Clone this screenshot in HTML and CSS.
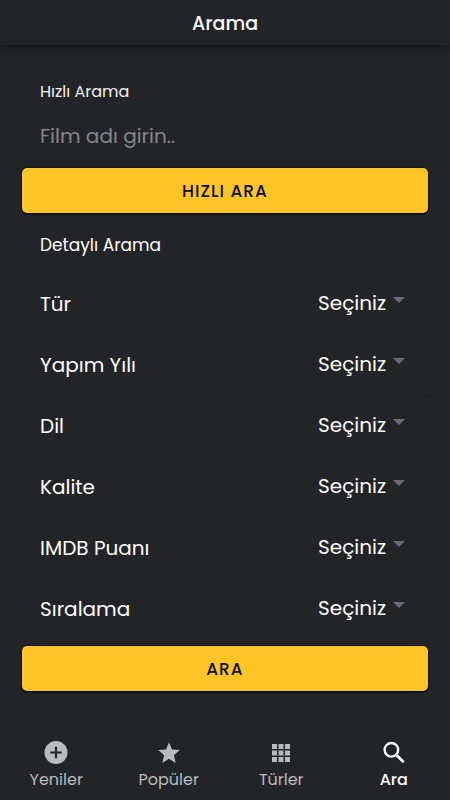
FILE: index.html
```html
<!DOCTYPE html>
<html lang="tr">
<head>
<meta charset="utf-8">
<meta name="viewport" content="width=device-width, initial-scale=1">
<title>Arama</title>
<link rel="stylesheet" href="styles.css">
</head>
<body>
<header class="toolbar"><h1 class="title">Arama</h1></header>
<main class="content">
  <form class="quick">
    <label class="quick-label" for="film">Hızlı Arama</label>
    <input class="quick-input" id="film" type="text" placeholder="Film adı girin..">
    <button class="submit" type="button">HIZLI ARA</button>
  </form>
  <form class="detail">
    <h2 class="heading">Detaylı Arama</h2>
    <div class="row">
      <label for="tur">Tür</label>
      <select id="tur"><option>Seçiniz</option></select>
      <span class="caret"></span>
    </div>
    <div class="row">
      <label for="yil">Yapım Yılı</label>
      <select id="yil"><option>Seçiniz</option></select>
      <span class="caret"></span>
    </div>
    <div class="row">
      <label for="dil">Dil</label>
      <select id="dil"><option>Seçiniz</option></select>
      <span class="caret"></span>
    </div>
    <div class="row">
      <label for="kalite">Kalite</label>
      <select id="kalite"><option>Seçiniz</option></select>
      <span class="caret"></span>
    </div>
    <div class="row">
      <label for="imdb">IMDB Puanı</label>
      <select id="imdb"><option>Seçiniz</option></select>
      <span class="caret"></span>
    </div>
    <div class="row">
      <label for="sira">Sıralama</label>
      <select id="sira"><option>Seçiniz</option></select>
      <span class="caret"></span>
    </div>
    <button class="submit" type="button">ARA</button>
  </form>
</main>
<nav class="tabs">
  <a class="tab" href="#yeniler">
    <svg class="icon" viewBox="0 0 28 28" aria-hidden="true"><path fill="currentColor" fill-rule="evenodd" d="M14 3a11.500 11.500 0 1 0 0 23 11.500 11.500 0 0 0 0-23zM12.900 8.800h2.200v4.600h4.600v2.200h-4.600v4.600h-2.200v-4.600H8.300v-2.200h4.600z"/></svg>
    <span>Yeniler</span>
  </a>
  <a class="tab" href="#populer">
    <svg class="icon" viewBox="0 0 28 28" aria-hidden="true"><path fill="currentColor" d="M14 20.800l6.700 4.100-1.800-7.700 5.900-5.100-7.800-.7L14 4.200l-3 7.200-7.800.7 5.900 5.100-1.800 7.700z"/></svg>
    <span>Popüler</span>
  </a>
  <a class="tab" href="#turler">
    <svg class="icon" viewBox="0 0 28 28" aria-hidden="true"><path fill="currentColor" d="M5 6h5v5H5zM11.500 6h5v5h-5zM18 6h5v5h-5zM5 12.500h5v5H5zM11.500 12.500h5v5h-5zM18 12.500h5v5h-5zM5 19h5v5H5zM11.500 19h5v5h-5zM18 19h5v5h-5z"/></svg>
    <span>Türler</span>
  </a>
  <a class="tab active" href="#ara" aria-current="page">
    <svg class="icon" viewBox="0 0 28 28" aria-hidden="true"><circle cx="11.400" cy="11.800" r="6.800" fill="none" stroke="currentColor" stroke-width="2.400"/><path fill="currentColor" d="M16 18.400v-1l.9-.9h1l6.800 6.800-1.900 1.900-6.800-6.800z"/></svg>
    <span>Ara</span>
  </a>
</nav>
</body>
</html>
```
FILE: styles.css
```css
* {
  box-sizing: border-box;
}

body {
  margin: 0;
  min-height: 100vh;
  display: flex;
  flex-direction: column;
  background: #232428;
  color: #fff;
  font-family: Poppins, Inter, sans-serif;
}

.toolbar {
  height: 45px;
  display: flex;
  align-items: center;
  justify-content: center;
  padding-top: 2px;
  box-shadow: 0 2px 7px rgba(0, 0, 0, 0.4);
}

.title {
  margin: 0;
  font-size: 19px;
  font-weight: 500;
  line-height: 28px;
}

.content {
  flex: 1;
  padding: 35px 20px 0;
}

.quick,
.detail {
  display: flex;
  flex-direction: column;
}

.quick-label {
  padding-left: 20px;
  font-size: 16px;
  line-height: 24px;
  color: #f2f2f2;
}

.quick-input {
  width: 100%;
  height: 58px;
  padding: 6px 20px 0;
  border: 0;
  border-bottom: 1px solid #1f2023;
  outline: 0;
  background: none;
  color: #fff;
  font: inherit;
  font-size: 20px;
}

.quick-input::placeholder {
  color: #85868a;
}

.submit {
  height: 45px;
  margin: 6px 2px 0;
  border: 0;
  border-radius: 5px;
  background: #ffc527;
  box-shadow: 0 0 2px #000, 0 1px 2px #000;
  color: #0b0b08;
  font: inherit;
  font-size: 17px;
  font-weight: 500;
  letter-spacing: 1px;
}

.heading {
  margin: 0;
  padding: 18px 20px 15px;
  font-size: 17px;
  font-weight: 400;
  line-height: 28px;
}

.row {
  height: 61px;
  display: flex;
  align-items: center;
  padding: 0 25px 0 20px;
  border-bottom: 1px solid #1f2023;
  font-size: 20px;
}

.row label {
  flex: 1;
}

.row select {
  appearance: none;
  padding: 0 0 2px;
  border: 0;
  background: none;
  color: #fff;
  font: inherit;
}

.caret {
  margin: 0 0 8px 6px;
  border: 6px solid transparent;
  border-top-color: #6b6c70;
  border-bottom: 0;
}

.tabs {
  height: 70px;
  display: flex;
  border-top: 1px solid #202125;
}

.tab {
  flex: 1;
  display: flex;
  flex-direction: column;
  align-items: center;
  padding-top: 7px;
  gap: 3px;
  color: #b9babc;
  font-size: 16px;
  line-height: 22px;
  text-decoration: none;
}

.tab.active {
  color: #fff;
  font-weight: 500;
}

.icon {
  width: 28px;
  height: 28px;
}
```
